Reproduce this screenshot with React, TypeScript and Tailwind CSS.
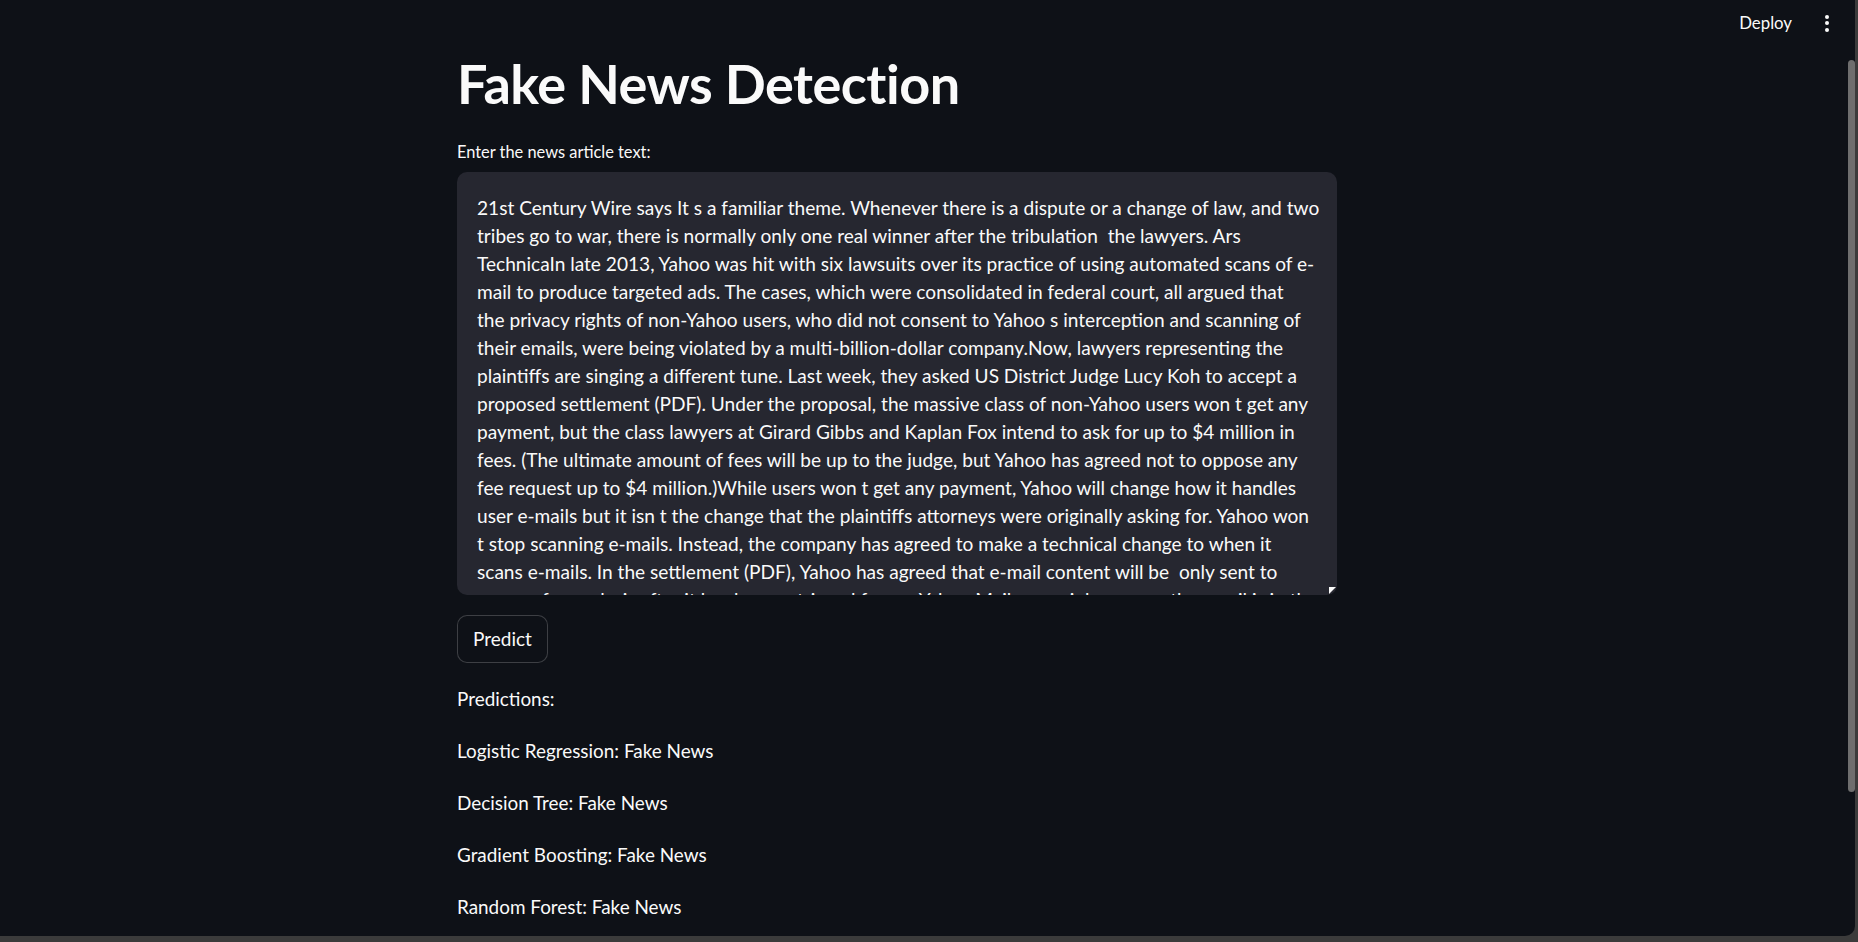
import { useState } from "react";

const articleLines = [
  "21st Century Wire says It s a familiar theme. Whenever there is a dispute or a change of law, and two",
  "tribes go to war, there is normally only one real winner after the tribulation  the lawyers. Ars",
  "TechnicaIn late 2013, Yahoo was hit with six lawsuits over its practice of using automated scans of e-",
  "mail to produce targeted ads. The cases, which were consolidated in federal court, all argued that",
  "the privacy rights of non-Yahoo users, who did not consent to Yahoo s interception and scanning of",
  "their emails, were being violated by a multi-billion-dollar company.Now, lawyers representing the",
  "plaintiffs are singing a different tune. Last week, they asked US District Judge Lucy Koh to accept a",
  "proposed settlement (PDF). Under the proposal, the massive class of non-Yahoo users won t get any",
  "payment, but the class lawyers at Girard Gibbs and Kaplan Fox intend to ask for up to $4 million in",
  "fees. (The ultimate amount of fees will be up to the judge, but Yahoo has agreed not to oppose any",
  "fee request up to $4 million.)While users won t get any payment, Yahoo will change how it handles",
  "user e-mails but it isn t the change that the plaintiffs attorneys were originally asking for. Yahoo won",
  "t stop scanning e-mails. Instead, the company has agreed to make a technical change to when it",
  "scans e-mails. In the settlement (PDF), Yahoo has agreed that e-mail content will be  only sent to",
  "servers for analysis after it has been retrieved from a Yahoo Mail user s inbox, once the email is in the",
];

const predictions = [
  ["Logistic Regression", "Fake News"],
  ["Decision Tree", "Fake News"],
  ["Gradient Boosting", "Fake News"],
  ["Random Forest", "Fake News"],
];

const App = () => {
  const [shown] = useState(true);

  return (
    <div className="w-full h-screen bg-[#3b3b3b] pr-[3px] pb-[6px] font-['Lato',sans-serif] text-[#fafafa]">
      <div className="h-full flex bg-[#0e1117] rounded-br-[10px] overflow-hidden">
        <main className="flex-1 flex flex-col overflow-hidden">
          {/* header */}
          <header className="h-[46px] flex items-center justify-end gap-[33px] pr-[19px] shrink-0">
            <span className="text-[16.8px] leading-none">Deploy</span>
            <div className="flex flex-col items-center gap-[2.5px]">
              <span className="w-[4px] h-[4px] rounded-full bg-[#fafafa]" />
              <span className="w-[4px] h-[4px] rounded-full bg-[#fafafa]" />
              <span className="w-[4px] h-[4px] rounded-full bg-[#fafafa]" />
            </div>
          </header>

          <section className="ml-[457px] w-[880px] flex flex-col pt-[5px]">
            <h1 className="text-[54px] leading-[66px] font-bold tracking-[-0.5px]">Fake News Detection</h1>

            <label className="mt-[23px] text-[16.4px] leading-[24px]">Enter the news article text:</label>

            <div className="relative mt-[8px]">
              <div className="h-[423px] rounded-[10px] bg-[#262730] overflow-hidden px-[20px] pt-[22px]">
                {articleLines.map((line, i) => (
                  <div key={i} className="whitespace-pre text-[19.1px] leading-[28px]">
                    {line}
                  </div>
                ))}
              </div>
              <span className="absolute right-[1px] bottom-[1px] w-0 h-0 border-t-[7px] border-t-[#fafafa] border-r-[7px] border-r-transparent" />
            </div>

            <button className="mt-[20px] self-start h-[48px] px-[15px] rounded-[10px] border border-[#fafafa33] bg-[#0e1117] text-[19px]">
              Predict
            </button>

            {shown && (
              <div className="mt-[20px] flex flex-col gap-[20px] text-[18.9px] leading-[32px]">
                <p>Predictions:</p>
                {predictions.map(([model, label]) => (
                  <p key={model}>
                    {model}: {label}
                  </p>
                ))}
              </div>
            )}
          </section>
        </main>

        {/* scrollbar */}
        <div className="w-[7px] pt-[60px] shrink-0">
          <div className="h-[732px] rounded-[4px] bg-[#6e6e6e]" />
        </div>
      </div>
    </div>
  );
};

export default App;
